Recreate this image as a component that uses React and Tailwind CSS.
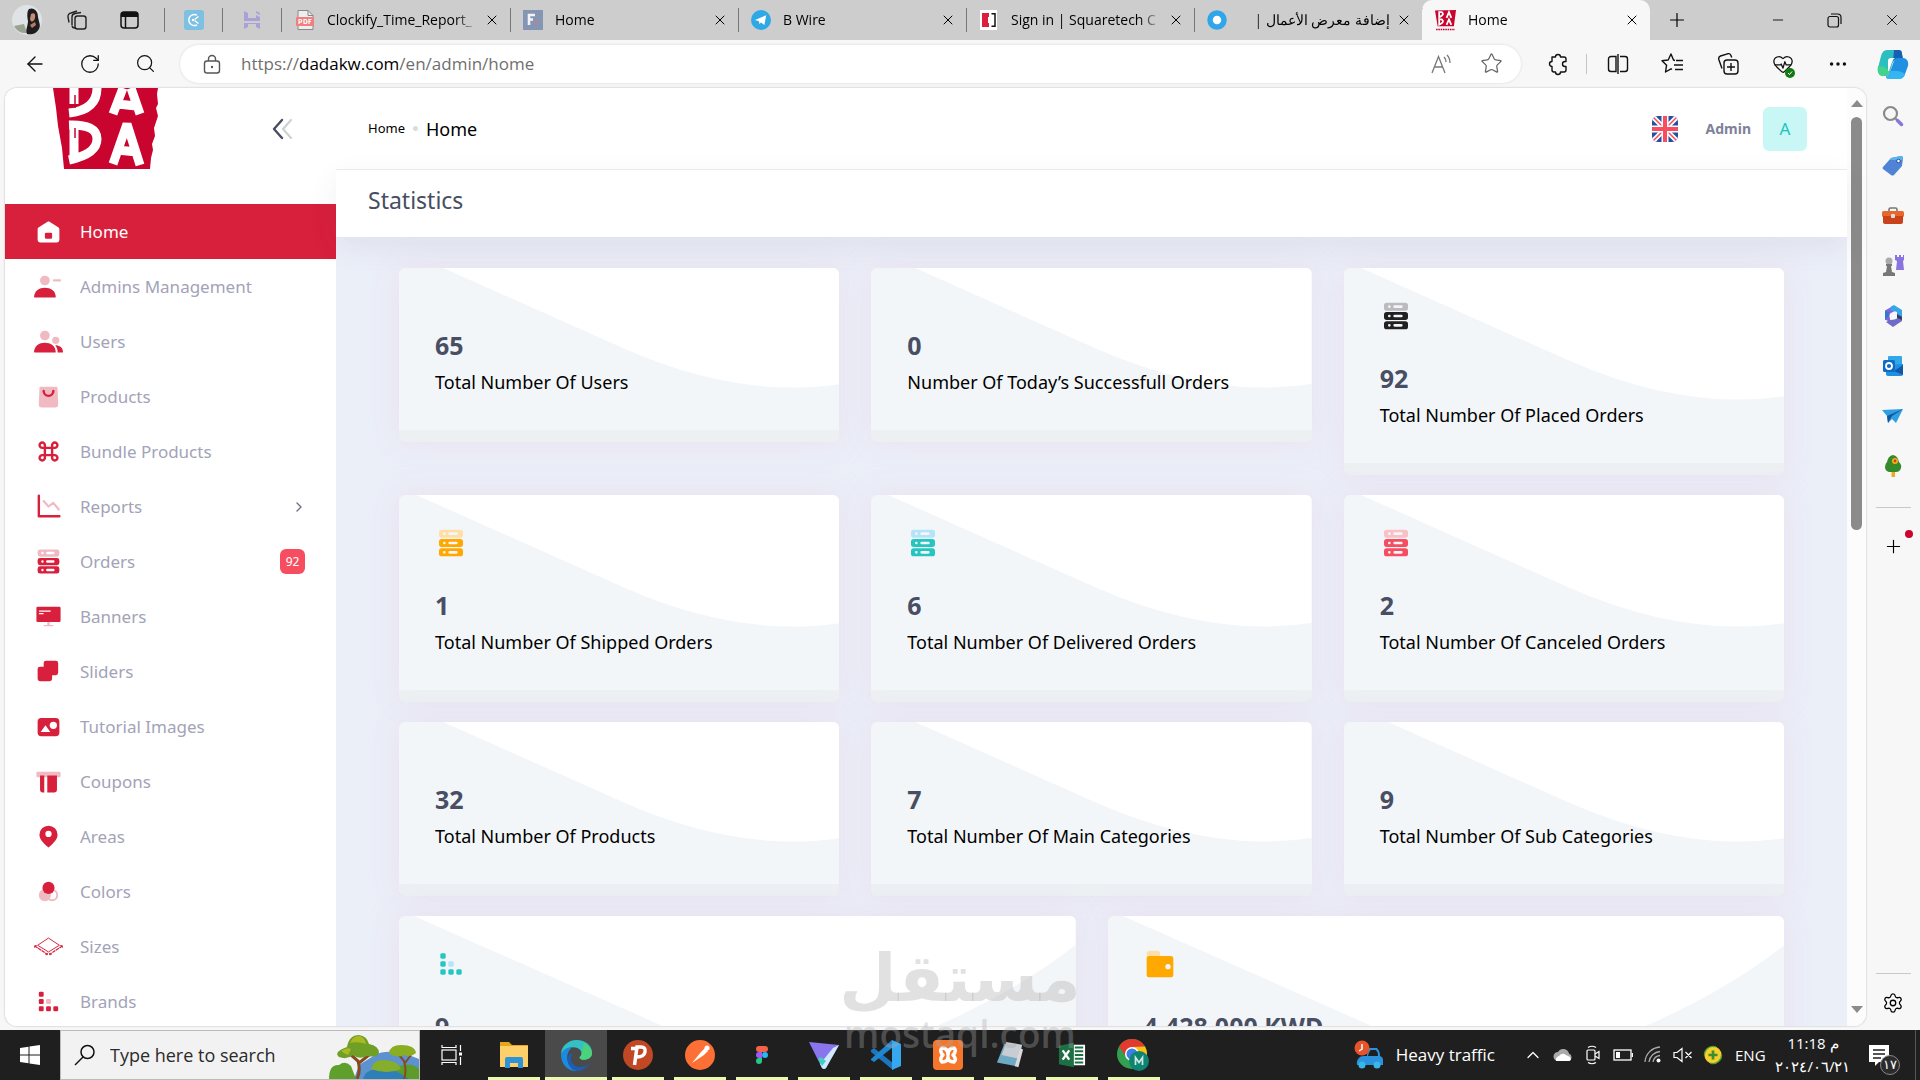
import React from "react";
import { ArrowLeft, RotateCw, Search, Star, X, Plus, Minus, Ellipsis, ChevronRight, ChevronUp, Settings, HeartPulse } from "lucide-react";

const UI = "font-['Open_Sans','Noto_Sans',sans-serif]";
const RED = "#d81f3c";
const PINK = "#f0bac2";

const Svg = ({ size = 24, vb = "0 0 24 24", children, className = "" }) => (
  <svg width={size} height={size} viewBox={vb} fill="none" aria-hidden="true" className={`shrink-0 ${className}`}>{children}</svg>
);

/* ---------- favicons ---------- */
const DadaMark = ({ size = 21 }) => (
  <Svg size={size} vb="0 0 20 20">
    <path d="M0 0.5 20 0 18 15.5H2.5Z" fill="#c9042f" />
    <path d="M4 2h2.500q3 2.500-2.500 5zM4 9h2.500q3 2.500-2.500 5zM11 7.500 13.300 2 15.500 7.500M11 14.200 13.300 9 15.500 14.200" stroke="#fff" strokeWidth="1.700" />
    <path d="M1 18.500h18" stroke="#c9042f" strokeWidth="1.500" strokeDasharray="1.500 .7" />
  </Svg>
);
const ClockifyIcon = () => (
  <Svg size={20} vb="0 0 20 20"><rect width="20" height="20" rx="3" fill="#7cc0e2" /><path d="M13 5.200a5.500 5.500 0 1 0 0 9.600M10.500 9.500l4-3M10.500 10.500l4 3" stroke="#fff" strokeWidth="1.400" /><circle cx="9" cy="10" r="1.200" fill="#fff" /></Svg>
);
const HIcon = () => (
  <Svg size={20} vb="0 0 20 20"><path d="M2 1 6 3v5h8V5l4 2v4H2zM14 1l4 2v2l-4-2zM2 13h16v6l-4-2v-3H6v3l-4 2z" fill="#aaa2d6" /></Svg>
);
const PdfIcon = () => (
  <Svg size={20} vb="0 0 20 20"><path d="M3 .5h10l5 5v14H3z" fill="#eee" stroke="#888" /><path d="M13 .5v5h5" stroke="#888" /><rect x="1" y="7" width="18" height="9" rx="1" fill="#f08080" /><path d="M4 14V9.500h1.500a1.300 1.300 0 0 1 0 2.600H4M9 9.500v4h1a2 2 0 0 0 0-4zM14 14V9.500h2.500M14 11.500h2" stroke="#fff" strokeWidth="1.200" /></Svg>
);
const FIcon = () => (
  <Svg size={20} vb="0 0 20 20"><rect width="20" height="20" fill="#8496b4" /><path d="M6 15V5h6M6 9.500h4" stroke="#f4f4f4" strokeWidth="2.600" /><path d="M13.500 9v6" stroke="#b9848e" strokeWidth="2" /></Svg>
);
const TelegramIcon = () => (
  <Svg size={20} vb="0 0 20 20"><circle cx="10" cy="10" r="10" fill="#2fa9e6" /><path d="M4 10 15.200 5.300 13.400 15 10 12.400 8.400 14 8 11.200z" fill="#fff" /></Svg>
);
const SquareIcon = () => (
  <Svg size={20} vb="0 0 20 20"><rect x="1" width="17" height="20" fill="#fff" /><rect x="3" y="3" width="7" height="14" fill="#dc1f3d" /><path d="M9 7h2v6H9z" fill="#fff" /><path d="M12.500 3.700H16v12.600h-3.500" stroke="#111" strokeWidth="1.500" /></Svg>
);
const RingIcon = () => (
  <Svg size={20} vb="0 0 20 20"><circle cx="10" cy="10" r="7" stroke="#2fa6ea" strokeWidth="5.500" fill="#fff" /></Svg>
);

const Tab = ({ icon, title, active, rtl }) => (
  <div className={`relative flex h-10 w-[228px] shrink items-center gap-3 pr-2 pl-[13px] ${active ? "rounded-t-[10px] bg-[#f7f7f7]" : ""}`}>
    {icon}
    <span dir={rtl ? "rtl" : "ltr"} className={`flex-1 overflow-hidden text-sm leading-6 whitespace-nowrap ${rtl ? "[mask-image:linear-gradient(to_left,black_85%,transparent)]" : "[mask-image:linear-gradient(to_right,black_85%,transparent)]"}`}>{title}</span>
    <button aria-label="Close tab" className="-ml-2 flex h-6 w-5 items-center justify-center"><X size={16} strokeWidth={1.5} /></button>
    {!active && <span className="absolute top-2 -right-px h-6 w-px bg-[#777]" />}
  </div>
);

const TabBar = () => (
  <div className="flex h-10 shrink-0 items-center bg-[#cdcdcd]">
    <div className="flex w-[164px] shrink-0 items-center gap-6 pl-3">
      <Svg size={30} vb="0 0 30 30">
        <circle cx="15" cy="15" r="15" fill="#dfe3e5" />
        <path d="M2 21 12 19l3 9q-9 1-13-7z" fill="#9aa292" />
        <path d="M17 4c5-2 9 2 9 8 1 6 3 8 1 12-3 5-8 6-12 5-2-4 1-8 1-13-1-5-1-10 1-12z" fill="#1f1c20" />
        <path d="M19 9c3-2 5 0 4 4s-4 5-5 1z" fill="#c58d74" />
        <path d="M18 20l5-3 1 3-4 3z" fill="#b47d68" />
      </Svg>
      <button aria-label="Workspaces">
        <Svg size={22} vb="0 0 22 22"><g stroke="#222" strokeWidth="1.400"><rect x="9" y="7" width="11" height="13" rx="2.500" /><path d="M6 16.500V8a3.500 3.500 0 0 1 3-3.500l6-1M3 13.500 2 8a3.500 3.500 0 0 1 3-4l6-2" /><path d="M6 17q.5 2 3 2" /></g></Svg>
      </button>
      <button aria-label="Tab actions menu" className="ml-2">
        <Svg size={20} vb="0 0 20 20"><rect x="1" y="2" width="17" height="16" rx="3" stroke="#111" strokeWidth="1.500" /><path d="M1 5a3 3 0 0 1 3-3h11a3 3 0 0 1 3 3v2H1z" fill="#111" /><path d="M5.500 7v11" stroke="#111" strokeWidth="1.500" /></Svg>
      </button>
    </div>
    <div className="flex h-6 w-[59px] shrink-0 items-center justify-center border-x border-[#777]"><ClockifyIcon /></div>
    <div className="flex h-6 w-[59px] shrink-0 items-center justify-center border-r border-[#777]"><HIcon /></div>
    <Tab icon={<PdfIcon />} title="Clockify_Time_Report_" />
    <Tab icon={<FIcon />} title="Home" />
    <Tab icon={<TelegramIcon />} title="B Wire" />
    <Tab icon={<SquareIcon />} title="Sign in | Squaretech C" />
    <Tab icon={<RingIcon />} title="إضافة معرض الأعمال |" rtl />
    <Tab icon={<DadaMark />} title="Home" active />
    <button aria-label="New tab" className="flex h-10 w-[54px] shrink-0 items-center justify-center"><Plus size={22} strokeWidth={1.3} /></button>
    <div className="ml-auto flex h-10 items-center">
      <button aria-label="Minimize" className="flex w-[57px] justify-center"><Minus size={16} strokeWidth={1.3} /></button>
      <button aria-label="Restore" className="flex w-[57px] justify-center"><Svg size={15} vb="0 0 15 15"><rect x="1" y="3.500" width="10.500" height="10.500" rx="2" stroke="#111" strokeWidth="1.200" /><path d="M4 1h6.500A3.500 3.500 0 0 1 14 4.500V11" stroke="#111" strokeWidth="1.200" /></Svg></button>
      <button aria-label="Close" className="flex w-[57px] justify-center"><X size={18} strokeWidth={1.2} /></button>
    </div>
  </div>
);

const CopilotIcon = () => (
  <Svg size={32} vb="0 0 32 32">
    <path d="M10 2h11c2 0 4 1 4 4l1 5h-6c-2 0-3 1-4 3l-3 10c-1 3-3 4-5 4H6c-4 0-6-4-5-8L4 8c1-4 3-6 6-6z" fill="#2bbfc0" />
    <path d="M1 18q7 0 12 5l-1 2c-1 2-2 3-4 3H6c-4 0-6-5-5-10z" fill="#42d28a" />
    <path d="M17 2h5c2 0 3 1 3 4l1 5h-6q-3 0-4 3z" fill="#175fb5" />
    <path d="M20 10h6c4 0 6 4 5 8l-3 8c-1 4-4 5-7 5h-9c-2 0-3-1-3-3 2 0 3-1 4-4l4-11q1-3 3-3z" fill="#1f90e2" />
    <path d="M14 23q9-1 14 3c-1 4-4 5-7 5h-9c-2 0-3-1-3-3 3 0 4-2 5-5z" fill="#35b6f2" />
    <path d="M18 10q-2 1-3 4l-3 9h-1V13q0-3 3-3z" fill="#fff" />
  </Svg>
);

const ToolBtn = ({ label, children, w = "w-[55px]" }) => (
  <button aria-label={label} className={`flex h-10 shrink-0 items-center justify-center text-[#111] ${w}`}>{children}</button>
);

const Toolbar = () => (
  <div className="flex h-12 shrink-0 items-center bg-[#f7f7f7] pb-px">
    <div className="flex w-[180px] shrink-0 items-center justify-center">
      <ToolBtn label="Back"><ArrowLeft size={24} strokeWidth={1.4} /></ToolBtn>
      <ToolBtn label="Refresh"><RotateCw size={22} strokeWidth={1.4} /></ToolBtn>
      <ToolBtn label="Search"><Search size={21} strokeWidth={1.4} /></ToolBtn>
    </div>
    <div className="flex h-[38px] flex-1 items-center rounded-full bg-white pr-[18px] pl-[22px] shadow-[0_0_3px_rgba(0,0,0,0.12)]">
      <Svg size={20} vb="0 0 20 20"><rect x="2.500" y="7" width="15" height="12" rx="2.500" stroke="#555" strokeWidth="1.400" /><path d="M6.500 7V5a3.500 3.500 0 0 1 7 0v2" stroke="#555" strokeWidth="1.400" /><circle cx="10" cy="13" r="1.200" fill="#555" /></Svg>
      <div className="ml-[19px] flex-1 text-[17px] leading-6 text-[#6f6f6f]"><a href="https://dadakw.com/en/admin/home">https://<span className="text-black">dadakw.com</span>/en/admin/home</a></div>
      <button aria-label="Read aloud" className="mr-7"><Svg size={22} vb="0 0 22 22"><path d="M2 20 8.500 3.500 15 20M4.500 14h8M14 4q2 2 2 5M17 2q3 3 3 8" stroke="#777" strokeWidth="1.300" /></Svg></button>
      <button aria-label="Add to favorites"><Star size={23} strokeWidth={1.3} color="#666" /></button>
    </div>
    <div className="flex shrink-0 items-center pl-[11px]">
      <ToolBtn label="Extensions" w="w-[51px]"><Svg size={24}><path d="M6 5h3.500a2.500 2.500 0 0 1 5 0H18a2 2 0 0 1 2 2v2.500h-1a2.500 2.500 0 0 0 0 5h1V18a2 2 0 0 1-2 2h-3.500a2.500 2.500 0 0 1-5 0H8a2 2 0 0 1-2-2v-3.500a2.500 2.500 0 0 1 0-5z" stroke="#111" strokeWidth="1.400" strokeLinejoin="round" /></Svg></ToolBtn>
      <span className="mx-[3px] h-5 w-px bg-[#c4c4c4]" />
      <ToolBtn label="Split screen"><Svg size={22} vb="0 0 22 22"><path d="M9 3.500H4A2.500 2.500 0 0 0 1.500 6v10A2.500 2.500 0 0 0 4 18.500h5zM13 3.500h5A2.500 2.500 0 0 1 20.500 6v10a2.500 2.500 0 0 1-2.500 2.500h-5M11 1v20" stroke="#111" strokeWidth="1.400" /></Svg></ToolBtn>
      <ToolBtn label="Favorites"><Svg size={23} vb="0 0 23 23"><path d="M14 8.500 12.500 8 10 2 7.200 8 1 8.700l4.600 4.500L4.500 20l5.500-3.200 1 .7M15 8.500h7M13 13h9M14 17.500h8" stroke="#111" strokeWidth="1.400" strokeLinejoin="round" /></Svg></ToolBtn>
      <ToolBtn label="Collections"><Svg size={22} vb="0 0 22 22"><g stroke="#111" strokeWidth="1.400"><rect x="7" y="7" width="14" height="14" rx="3" /><path d="M14 10v8M10 14h8M5 15.500 1.800 6.500A3 3 0 0 1 3.500 3l7-2.200A3 3 0 0 1 14 2.500l.7 2" /></g></Svg></ToolBtn>
      <ToolBtn label="Browser essentials"><span className="relative"><HeartPulse size={22} strokeWidth={1.4} /><span className="absolute -right-px -bottom-[3px] flex h-[10px] w-[10px] items-center justify-center rounded-full bg-[#137a13]"><Svg size={8} vb="0 0 8 8"><path d="m2 4 1.500 1.500L6 2.500" stroke="#fff" /></Svg></span></span></ToolBtn>
      <ToolBtn label="Settings and more"><Ellipsis size={22} strokeWidth={1.8} /></ToolBtn>
      <ToolBtn label="Copilot"><CopilotIcon /></ToolBtn>
    </div>
  </div>
);

/* ---------- site icons (24 unit grid) ---------- */
const Server = ({ c = RED, l = PINK, size = 29 }) => {
  const bar = (y, f) => <path key={y} fillRule="evenodd" fill={f} d={`M5 ${y}h14a2 2 0 0 1 2 2v2a2 2 0 0 1-2 2H5a2 2 0 0 1-2-2v-2a2 2 0 0 1 2-2zM7 ${y + 2}a1 1 0 1 0 0 2 1 1 0 0 0 0-2zM11 ${y + 2}a1 1 0 0 0 0 2h5a1 1 0 0 0 0-2z`} />;
  return <Svg size={size}>{bar(2, l)}{bar(9, c)}{bar(16, c)}</Svg>;
};
const Bars = ({ c = RED, l = PINK, size = 29 }) => (
  <Svg size={size}>{[[4, 4, c], [4, 10, c], [10, 10, l], [4, 16, c], [10, 16, c], [16, 16, c]].map(([x, y, f]) => <rect key={`${x}-${y}`} x={x} y={y} width="4" height="4" rx="1" fill={f} />)}</Svg>
);
const HomeIcon = () => (
  <Svg size={29}><path fillRule="evenodd" fill="#fff" d="M4 8.400 11.500 3.800a1 1 0 0 1 1 0L20 8.400a2 2 0 0 1 1 1.700V19a2 2 0 0 1-2 2H5a2 2 0 0 1-2-2v-8.900a2 2 0 0 1 1-1.700zM10 13a1 1 0 0 0-1 1v3a1 1 0 0 0 1 1h4a1 1 0 0 0 1-1v-3a1 1 0 0 0-1-1z" /></Svg>
);
const AdminIcon = () => (
  <Svg size={29}><circle cx="9" cy="7" r="4" fill={PINK} /><path d="M16.500 7h5" stroke={PINK} strokeWidth="1.800" strokeLinecap="round" /><path d="M0 20.600C.4 15.600 4.300 13 9 13s8.800 2.300 9 7.600c0 .2 0 .4-.8.4H.6c-.2 0-.6-.2-.6-.4z" fill={RED} /></Svg>
);
const UsersIcon = () => (
  <Svg size={29}><circle cx="9" cy="7" r="4" fill={PINK} /><circle cx="18" cy="11" r="3" fill={PINK} /><path d="M0 20.600C.4 15.600 4.300 13 9 13s8.800 2.300 9 7.600c0 .2 0 .4-.8.4H.6c-.2 0-.6-.2-.6-.4zM17.600 15c3.400 0 6.200 1.700 6.400 5.400 0 .2 0 .6-.6.6h-3.800c0-2.200-.7-4.300-2-6z" fill={RED} /></Svg>
);
const BagIcon = () => (
  <Svg size={29}><path d="M5.500 4h13a1 1 0 0 1 1 .9L20 19a2 2 0 0 1-2 2H6a2 2 0 0 1-2-2l.5-14.100a1 1 0 0 1 1-.9z" fill={PINK} /><path d="M8 7.500a4 4 0 0 0 8 0" stroke={RED} strokeWidth="2" strokeLinecap="round" /></Svg>
);
const CmdIcon = () => (
  <Svg size={29}><path d="M9 9V7a2.200 2.200 0 1 0-2 2h10a2.200 2.200 0 1 0-2-2v10a2.200 2.200 0 1 0 2-2H7a2.200 2.200 0 1 0 2 2z" stroke={RED} strokeWidth="2" /></Svg>
);
const ReportIcon = () => (
  <Svg size={29}><path d="M4 3v17h17" stroke={RED} strokeWidth="2" strokeLinecap="round" strokeLinejoin="round" /><path d="m8 7.500 4 4.500 4-3 4.500 5.500" stroke={PINK} strokeWidth="1.800" strokeLinecap="round" strokeLinejoin="round" /></Svg>
);
const BannerIcon = () => (
  <Svg size={29}><path d="M11 15h2v4h3v1H8v-1h3z" fill={PINK} /><rect x="2" y="4" width="20" height="12.500" rx="1" fill={RED} /><path d="M4.500 7.500h9M4.500 9.700h3" stroke="#fff" strokeWidth="1" strokeLinecap="round" /></Svg>
);
const SliderIcon = () => (
  <Svg size={29}><rect x="8" y="3" width="12" height="12" rx="2" fill={RED} /><rect x="3" y="8" width="12" height="12" rx="2" fill={RED} /></Svg>
);
const ImageIcon = () => (
  <Svg size={29}><rect x="3" y="5" width="18" height="15" rx="3" fill={RED} /><circle cx="16" cy="11" r="3" fill="#fff" /><path d="m5.500 16.500 4-5.500 4 5.500z" fill="#fff" /></Svg>
);
const CouponIcon = () => (
  <Svg size={29}><rect x="2" y="4" width="20" height="4.500" rx="1" fill={PINK} /><path d="M5 7h3.500v14H7a2 2 0 0 1-2-2zM11 7h8v12a2 2 0 0 1-2 2h-6z" fill={RED} /></Svg>
);
const PinIcon = () => (
  <Svg size={29}><path fillRule="evenodd" d="M12 21c-5-4-7.500-7.300-7.500-10.500a7.500 7.500 0 0 1 15 0C19.500 13.700 17 17 12 21zm0-8.500a2.600 2.600 0 1 0 0-5.200 2.600 2.600 0 0 0 0 5.200z" fill={RED} /></Svg>
);
const ColorsIcon = () => (
  <Svg size={29}><circle cx="9" cy="15" r="5" fill={PINK} /><circle cx="15" cy="15" r="4.200" stroke={PINK} strokeWidth="1.600" /><circle cx="12" cy="9" r="5" fill={RED} /></Svg>
);
const SizesIcon = () => (
  <Svg size={29}><g stroke={RED} strokeWidth=".8"><path d="M12 5 3 11l9 5.500 9-5.500z" /><path d="m.5 11.500 10.500 7M23.500 11.500l-10.500 7" strokeWidth="1" strokeDasharray="3 .5" /><path d="m.5 13 .2-1.800 1.800.3M23.500 13l-.2-1.800-1.800.3M9.500 18.700l1.700.1-.3-1.600M14.500 18.700l-1.700.1.3-1.600" /></g></Svg>
);
const WalletIcon = () => (
  <Svg size={32}><rect x="2" y="2" width="10" height="9" rx="2" fill="#ffdfa8" /><path fillRule="evenodd" d="M4 6h16a2 2 0 0 1 2 2v12a2 2 0 0 1-2 2H4a2 2 0 0 1-2-2V8a2 2 0 0 1 2-2zm14 6a2 2 0 1 0 0 4 2 2 0 0 0 0-4z" fill="#ffa800" /></Svg>
);

const MENU = [
  ["Home", HomeIcon], ["Admins Management", AdminIcon], ["Users", UsersIcon], ["Products", BagIcon], ["Bundle Products", CmdIcon],
  ["Reports", ReportIcon], ["Orders", Server], ["Banners", BannerIcon], ["Sliders", SliderIcon], ["Tutorial Images", ImageIcon],
  ["Coupons", CouponIcon], ["Areas", PinIcon], ["Colors", ColorsIcon], ["Sizes", SizesIcon], ["Brands", Bars],
];

const Sidebar = () => (
  <aside className="flex w-[331px] shrink-0 flex-col bg-white">
    <div className="flex h-[116px] shrink-0 items-start justify-between pr-[42px] pl-11">
      <svg width="110" height="81" viewBox="0 0 110 81" fill="none" role="img" aria-label="Dada">
        <path d="M4 0h105l-1 6 1 10-2 4 2 8-4 12 1 8-3 8 1 6-2 8-1 11H15L13 60 9 38 7 20z" fill="#c9042f" />
        <path d="M25 0v16M20 25q28-3 28-25M64 26 74 0M91 26 82 0M69 16l18 2" stroke="#fff" strokeWidth="9" />
        <path d="M25 35v38M20 37q28-1 28 14T20 72" stroke="#fff" strokeWidth="9" />
        <path d="M64 76 78 36 91 77M68 62l20 2" stroke="#fff" strokeWidth="9" strokeLinejoin="bevel" />
        <path d="M26 7v13M26 40v10" stroke="#c9042f" strokeWidth="1.500" />
      </svg>
      <button aria-label="Collapse menu" className="mt-[29px]">
        <Svg size={24}><path d="m12 3-8 9 8 9" stroke="#484e63" strokeWidth="2.400" strokeLinecap="round" strokeLinejoin="round" /><path d="m21 3-8 9 8 9" stroke="#cfd0d6" strokeWidth="2.200" strokeLinecap="round" strokeLinejoin="round" /></Svg>
      </button>
    </div>
    <nav>
      <ul>
        {MENU.map(([label, Icon], i) => (
          <li key={label}>
            <a href={`#${label}`} className={`flex h-[55px] items-center pr-[31px] pl-[29px] text-[17px] ${i === 0 ? "bg-[#d81f3c] text-white" : "text-[#a2a3b7]"}`}>
              <Icon />
              <span className="ml-[17px] flex-1">{label}</span>
              {label === "Reports" && <ChevronRight size={16} strokeWidth={2} color="#6c7080" className="-mr-0.5" />}
              {label === "Orders" && <span className="flex h-[25px] w-[25px] items-center justify-center rounded-md bg-[#f64e60] text-xs text-white">92</span>}
            </a>
          </li>
        ))}
      </ul>
    </nav>
  </aside>
);

const Wave = ({ shape }) => (
  <svg className="absolute inset-x-0 top-0 h-full w-full" viewBox={shape === "wide" ? "0 0 677 207" : shape === "short" ? "0 12 440 174" : "0 0 440 207"} preserveAspectRatio="xMinYMin slice" aria-hidden="true">
    {shape === "wide"
      ? <path d="M15 0 264 110Q420 175 538 110 620 74 677 29V0z" fill="#fff" />
      : <path d="M15 -1 226 93Q340 143 440 128V0z" fill="#fff" />}
  </svg>
);

const StatCard = ({ value, label, icon, shape }) => (
  <article className="relative self-start overflow-hidden rounded-md border-b-[12px] border-[#ecf0f3] bg-[#f3f6f9] shadow-[0_0_30px_rgba(232,220,238,0.8)]">
    <Wave shape={shape} />
    <div className={`relative px-9 pb-[35px] ${icon ? "pt-8" : "pt-[61px]"}`}>
      {icon && <div className="mb-[30px]">{icon}</div>}
      <div className="text-[25px] leading-8 font-bold text-[#484e63]">{value}</div>
      <div className="mt-2 text-lg leading-[26px] text-black">{label}</div>
    </div>
  </article>
);

const UkFlag = () => (
  <svg width="26" height="26" viewBox="0 0 26 26" role="img" aria-label="English" className="rounded-md">
    <rect width="26" height="26" fill="#27509b" />
    <path d="M0 0 26 26M26 0 0 26" stroke="#fff" strokeWidth="5" /><path d="M0 0 26 26M26 0 0 26" stroke="#f64e60" strokeWidth="1.500" />
    <path d="M13 0v26M0 13h26" stroke="#fff" strokeWidth="7" /><path d="M13 0v26M0 13h26" stroke="#f64e60" strokeWidth="4" />
  </svg>
);

const Page = () => (
  <div className="flex min-w-0 flex-1 overflow-hidden rounded-[12px] bg-white font-['Noto_Sans','Open_Sans',sans-serif] shadow-[0_0_2px_rgba(0,0,0,0.3)]">
    <Sidebar />
    <main className="flex min-w-0 flex-1 flex-col bg-[#ebeff8]">
      <header className="relative z-10 flex h-[82px] shrink-0 items-center border-b border-[#ebedf3] bg-white pr-10 pl-8">
        <nav aria-label="Breadcrumb" className="flex items-center gap-2 text-black">
          <a href="#home" className="text-[13px]">Home</a><span className="h-[5px] w-[5px] rounded-full bg-[#d9dbe0]" /><span className="text-lg">Home</span>
        </nav>
        <div className="ml-auto flex items-center">
          <UkFlag />
          <span className="mr-3 ml-7 text-sm font-bold text-[#7e8299]">Admin</span>
          <span className="flex h-11 w-11 items-center justify-center rounded-md bg-[#c9f7f5] text-[17px] text-[#1bc5bd]">A</span>
        </div>
      </header>
      <div className="relative z-10 flex h-[67px] shrink-0 items-center bg-white px-8 pb-2 shadow-[0_10px_30px_rgba(82,63,105,0.08)]">
        <h1 className="text-[23px] leading-8 text-[#464e5f]">Statistics</h1>
      </div>
      <section className="flex min-h-0 flex-1 flex-col gap-5 overflow-hidden px-[63px] pt-[31px]">
        <div className="grid shrink-0 grid-cols-3 gap-x-8 gap-y-5">
          <StatCard value="65" label="Total Number Of Users" shape="short" />
          <StatCard value="0" label="Number Of Today’s Successfull Orders" shape="short" />
          <StatCard value="92" label="Total Number Of Placed Orders" icon={<Server size={32} c="#212121" l="#bcbabf" />} />
          <StatCard value="1" label="Total Number Of Shipped Orders" icon={<Server size={32} c="#ffa800" l="#ffdfa8" />} />
          <StatCard value="6" label="Total Number Of Delivered Orders" icon={<Server size={32} c="#26c6c0" l="#b5e3f7" />} />
          <StatCard value="2" label="Total Number Of Canceled Orders" icon={<Server size={32} c="#f64e60" l="#f9c0c6" />} />
          <StatCard value="32" label="Total Number Of Products" shape="short" />
          <StatCard value="7" label="Total Number Of Main Categories" shape="short" />
          <StatCard value="9" label="Total Number Of Sub Categories" shape="short" />
        </div>
        <div className="grid shrink-0 grid-cols-2 gap-8">
          <StatCard value="9" label="Total Number Of Brands" shape="wide" icon={<Bars size={32} c="#26c6c0" l="#b5e3f7" />} />
          <StatCard value="4,428.000 KWD" label="Total Sales" shape="wide" icon={<WalletIcon />} />
        </div>
      </section>
    </main>
    <div className="flex w-[19px] shrink-0 flex-col items-center bg-[#fcfcfc] pt-[10px] pb-[10px]" aria-hidden="true">
      <Svg size={12} vb="0 0 12 12"><path d="M6 2 12 9H0z" fill="#8b8b8b" /></Svg>
      <span className="mt-[7px] h-[45%] w-[11px] rounded-full bg-[#8b8b8b]" />
      <Svg size={12} vb="0 0 12 12" className="mt-auto"><path d="M6 9 12 2H0z" fill="#8b8b8b" /></Svg>
    </div>
  </div>
);

/* ---------- browser side panel ---------- */
const PANEL = [
  ["Search", <Svg size={22} vb="0 0 22 22"><circle cx="8.500" cy="8.500" r="6.500" stroke="#8a8a8a" strokeWidth="2.200" /><path d="m13.500 13.500 2 2" stroke="#8a8a8a" strokeWidth="2" /><path d="m15.500 15.500 4 4" stroke="#8a75e0" strokeWidth="3.500" strokeLinecap="round" /></Svg>],
  ["Shopping", <Svg size={22} vb="0 0 22 22"><path d="M1 12 9 3l10-2q2 0 2 2l-1 8-8 9q-1.500 1-3 0l-8-6q-1-1 0-2z" fill="#4f83d6" /><path d="M9 3l10-2q2 0 2 2l-1 2H8z" fill="#58b4ee" /><circle cx="16.500" cy="6" r="1.800" fill="#fff" stroke="#274f9b" /></Svg>],
  ["Tools", <Svg size={22} vb="0 0 22 22"><path d="M7 7V4.500A1.500 1.500 0 0 1 8.500 3h5A1.500 1.500 0 0 1 15 4.500V7" stroke="#777" strokeWidth="1.600" /><rect y="6" width="22" height="6" rx="1.500" fill="#e8682c" /><path d="M1 11h20v6a2 2 0 0 1-2 2H3a2 2 0 0 1-2-2z" fill="#c9421c" /><rect x="9" y="9" width="4" height="4" rx="1" fill="#ddd" /></Svg>],
  ["Games", <Svg size={22} vb="0 0 22 22"><circle cx="7" cy="6" r="3.500" fill="#aaa" /><path d="M4 9h6v2H9l1 6H4l1-6H4zM1 18q6-3 12 0v3H1z" fill="#777" /><path d="M13 0h2v2h2V0h2v2h2V0h1v5l-1 1 1 9h-8l1-9-2-1z" fill="#8a75e0" /></Svg>],
  ["Microsoft 365", <Svg size={22} vb="0 0 22 22"><path d="M11 1 3 5.500v9L8 17v-8l6-4z" fill="#8465d8" /><path d="M9 1.500 12 0l8 5v8l-5-3V7L8 5z" fill="#35a6e8" /><path d="M20 10v6l-9 6-7-5 4-2 6-1z" fill="#6f6cc9" /><path d="m15 9 5 3v3l-5-2z" fill="#333c66" /><path d="M3 6v9l4-4V7z" fill="#3276d0" /><circle cx="11" cy="11" r="3.500" fill="#f7f7f7" /></Svg>],
  ["Outlook", <Svg size={22} vb="0 0 22 22"><rect x="6" y="1" width="14" height="12" rx="1" fill="#31a8ea" /><path d="M4 10 21 9v10a2 2 0 0 1-2 2H6a2 2 0 0 1-2-2z" fill="#1f8fdf" /><path d="m21 10-9 6 9 4z" fill="#1357a8" /><rect x="1" y="5" width="12" height="12" rx="1.500" fill="#0f6cc4" /><circle cx="7" cy="11" r="3" stroke="#fff" strokeWidth="1.800" /></Svg>],
  ["Drop", <Svg size={22} vb="0 0 22 22"><path d="m0 5 21-1-7 14-4-4-4 4-1-7z" fill="#2f9fe4" /><path d="M21 4 5 11l1 7 4-7z" fill="#15559c" /></Svg>],
  ["E-tree", <Svg size={22} vb="0 0 22 22"><path d="M9.500 15h3.500v7H9.500z" fill="#f2a91d" /><path d="M11 0q5 1 6 7 3 3 2 6-1 4-5 4H7q-4-1-4-5 0-3 2-5 1-6 6-7z" fill="#358a2a" /><circle cx="13" cy="6" r="3" fill="#f5b21f" /><circle cx="13" cy="6" r="1.400" fill="#e03c20" /></Svg>],
];
const EdgePanel = () => (
  <aside className="flex w-[54px] shrink-0 flex-col items-center pt-[3px] pb-3">
    {PANEL.map(([label, icon]) => <button key={label} aria-label={label} className="flex h-[50px] w-full shrink-0 items-center justify-center">{icon}</button>)}
    <span className="mt-4 h-px w-[35px] bg-[#c9c9c9]" />
    <button aria-label="Customize" className="relative mt-[14px] flex h-12 w-full items-center justify-center"><Plus size={21} strokeWidth={1.3} /><span className="absolute top-2 right-[7px] h-2 w-2 rounded-full bg-[#c9042f]" /></button>
    <span className="mt-auto h-px w-[35px] bg-[#c9c9c9]" />
    <button aria-label="Settings" className="mt-[18px]"><Settings size={22} strokeWidth={1.4} /></button>
  </aside>
);

/* ---------- taskbar ---------- */
const APPS = [
  ["File Explorer", <Svg size={30} vb="0 0 30 30"><path d="M1 2h9l3 3h16v22H1z" fill="#e5a51c" /><path d="M1 6h28v21H1z" fill="#fdd06a" /><path d="M6 28v-9a2 2 0 0 1 2-2h14a2 2 0 0 1 2 2v9h-5v-5h-8v5z" fill="#2f93d8" /></Svg>],
  ["Microsoft Edge", <Svg size={31} vb="0 0 30 30"><path d="M15 0c9 0 15 6 15 12 0 5-4 7-8 7-3 0-4-1-4-2s2-2 2-4c0-3-3-6-8-6C6 7 2 10 0 14 0 6 7 0 15 0z" fill="#35c1c4" /><path d="M22 3c5 3 8 6 8 10 0 4-4 6-8 6-3 0-4-1-4-2s2-2 2-4 2-7 2-10z" fill="#4bd27a" /><path d="M0 14C2 9 6 7 11 7c-3 2-5 6-5 10 0 7 5 12 11 13C7 31 0 24 0 14z" fill="#1b8be0" /><path d="M11 13c-4 7 1 14 9 13 4 0 6-2 8-4-3 6-8 8-13 8C9 29 5 22 7 16c1-2 2-3 4-3z" fill="#1c5eb0" /></Svg>, true],
  ["P app", <Svg size={30} vb="0 0 30 30"><circle cx="15" cy="15" r="15" fill="#c14824" /><path d="M11.500 25 14 7h4q5 0 4 5t-8 5M8 8.500h6" stroke="#fff" strokeWidth="3.500" /></Svg>],
  ["Postman", <Svg size={30} vb="0 0 30 30"><circle cx="15" cy="15" r="15" fill="#fd7035" /><path d="m7 23 9-11 3 3zM16 12l4-4 3 3-4 4z" fill="#fff" /><circle cx="22" cy="8" r="2.500" fill="#fff" /></Svg>],
  ["Figma", <Svg size={20} vb="0 0 20 20"><path d="M7 1h3v6H7a3 3 0 0 1 0-6zM10 1h3a3 3 0 0 1 0 6h-3z" fill="#f4624a" /><path d="M7 7h3v6H7a3 3 0 0 1 0-6z" fill="#9a5cf5" /><circle cx="13" cy="10" r="3" fill="#2ab5f5" /><path d="M7 13h3v3a3 3 0 1 1-3-3z" fill="#22c983" /></Svg>],
  ["Proton VPN", <Svg size={30} vb="0 0 30 30"><path d="M0 2 30 5 17 28q-2 2-4 0z" fill="#8b75ee" /><path d="M30 5 17 28q-2 2-4 0l-2-4 13-16z" fill="#cfe9ff" /><path d="m9 19 3-2 5 4-4 5z" fill="#3fd0c0" /></Svg>],
  ["Visual Studio Code", <Svg size={30} vb="0 0 30 30"><path d="M0 10 3 8l19 15v7L0 12z" fill="#1b76bd" /><path d="M0 19 21 0v8L3 22l-3-2z" fill="#1f86d0" /><path d="M21 0 30 4v22l-9 4z" fill="#35a8f0" /></Svg>],
  ["XAMPP", <Svg size={30} vb="0 0 30 30"><rect width="30" height="30" rx="4" fill="#f5762b" /><path d="M9 8q6 0 6 7 0-7 6-7 3 3-1 7 4 4 1 7-6 0-6-5 0 5-6 5-3-3 1-7-4-4-1-7z" stroke="#fff" strokeWidth="3.500" strokeLinejoin="round" /></Svg>],
  ["Notepad", <Svg size={28} vb="0 0 30 30"><path d="M9 3 26 6 22 27 1 23z" fill="#6fa9c4" /><path d="M11 1 28 4 25 19 6 15z" fill="#c7cdd2" /><path d="m26 8 3 1-5 19-4-1z" fill="#dadada" /></Svg>],
  ["Excel", <Svg size={28} vb="0 0 30 30"><path d="M15 4h14v22H15z" fill="#fff" /><path d="M18 7h9M18 11h9M18 15h9M18 19h9M18 23h9" stroke="#1d7044" strokeWidth="2" /><path d="M1 5 17 2v26L1 25z" fill="#1d7044" /><path d="m5 10 7 10M12 10 5 20" stroke="#fff" strokeWidth="2.500" /></Svg>],
  ["Google Chrome", <Svg size={34} vb="0 0 34 34"><circle cx="15" cy="16" r="15" fill="#33a04f" /><path d="M2 8.500a15 15 0 0 1 26 0L15 12z" fill="#e23b2e" /><path d="M28 8.500a15 15 0 0 1-12 22.500l5-13-6-9z" fill="#fbc116" /><path d="M2 8.500 10 20l5-11z" fill="#e23b2e" /><circle cx="15" cy="16" r="7" fill="#fff" /><circle cx="15" cy="16" r="5.500" fill="#3c7fe6" /><circle cx="22" cy="23" r="10" fill="#0e8573" /><path d="M18.500 27v-7.500l3.500 5 3.500-5V27" stroke="#cfe6e2" strokeWidth="1.700" /></Svg>],
];

const Taskbar = () => (
  <footer className="flex h-[50px] shrink-0 items-stretch bg-[#1f1f1f] text-white">
    <button aria-label="Start" className="flex w-[60px] shrink-0 items-center justify-center"><Svg size={20} vb="0 0 20 20"><path d="M0 3 8.500 1.700V9.500H0zM9.500 1.500 20 0v9.500H9.500zM0 10.500h8.500v7.800L0 17zM9.500 10.500H20V20L9.500 18.500z" fill="#fff" /></Svg></button>
    <label className="relative flex w-[360px] shrink-0 items-center overflow-hidden border border-[#bbb] bg-[#f2f2f2] pl-[13px]">
      <Svg size={22} vb="0 0 22 22"><circle cx="13.500" cy="8" r="6.500" stroke="#111" strokeWidth="1.500" /><path d="M9 13 1 21" stroke="#111" strokeWidth="1.500" /></Svg>
      <input type="text" aria-label="Search" placeholder="Type here to search" className="ml-3.5 w-[190px] bg-transparent text-lg placeholder:text-[#2b2b2b] focus:outline-none" />
      <svg width="90" height="44" viewBox="0 0 90 44" className="absolute right-0 bottom-0" aria-hidden="true">
        <path d="M30 30 46 20q15-8 44 4v20H25z" fill="#5b92cf" />
        <path d="M0 44q0-15 10-14 6-5 12 1l5 13z" fill="#5fa02c" /><path d="M66 44q-2-12 8-14 10-2 16 4v10z" fill="#5d9b2b" />
        <path d="M34 44q2-8 12-10 14-4 34 10z" fill="#2e7fb8" />
        <path d="M42 34q2-10 14-9 14 1 16 9-14 6-30 0z" fill="#86ae2d" />
        <path d="M28 44q4-8 1-18l-8-7M30 28l10-8" fill="none" stroke="#874a20" strokeWidth="3" /><path d="M75 44q3-8 0-18l-5-6M76 28l6-8" fill="none" stroke="#874a20" strokeWidth="2" />
        <path d="M18 12q2-12 12-12 8 1 10 9 10 2 10 9-2 5-12 3-8 4-14-1-6 5-14 2-6-5 8-10z" fill="#6f9f25" /><path d="M21 8q3-8 10-7 5 2 6 8-8-3-16-1zM12 16q6-4 10-2l-3 6q-5-2-7-4z" fill="#a9b823" />
        <path d="M60 18q1-8 12-8 14 0 15 8-6 5-12 2-8 4-15-2z" fill="#8aad22" />
      </svg>
    </label>
    <button aria-label="Task view" className="flex w-[63px] shrink-0 items-center justify-center"><Svg size={22} vb="0 0 22 22"><g stroke="#fff" strokeWidth="1.200"><rect x="1" y="6" width="14" height="10" /><path d="M1 1v2.500h14V1M1 21v-2.500h14V21M19.500 1v6M19.500 13v8" /></g><rect x="18" y="8.500" width="3" height="3" fill="#fff" /></Svg></button>
    {APPS.map(([name, icon, on]) => (
      <button key={name} aria-label={name} className={`relative flex w-[62px] shrink-0 items-center justify-center ${on ? "bg-[#4a4a4a]" : ""}`}>
        {icon}<span className={`absolute bottom-0 h-[3px] bg-[#ecf9b0] ${on ? "inset-x-0" : "inset-x-[5px]"}`} />
      </button>
    ))}
    <div className="ml-auto flex shrink-0 items-center">
      <button className="mr-7 flex items-center gap-3 text-[17px]">
        <Svg size={30} vb="0 0 30 30"><path d="M5 18q1-2 5-2h3q0-5 2-8h8q3 3 3 8 3 1 3 4v5H3q-1-4 2-7z" fill="#2b93dd" /><path d="M14 16q1-5 3-6h5q2 2 2 6z" fill="#1f1f1f" /><circle cx="8" cy="25" r="3.500" fill="#38b6e8" /><circle cx="23" cy="25" r="3.500" fill="#38b6e8" /><circle cx="8" cy="8" r="7.500" fill="#e9532a" /><path d="M8 4v5l-3 2" stroke="#fff" strokeWidth="1.500" /></Svg>
        Heavy traffic
      </button>
      <div className="flex items-center gap-[10px]">
        <ChevronUp size={20} strokeWidth={1.5} />
        <Svg size={20} vb="0 0 20 20"><path d="M5 16a4.500 4.500 0 0 1 0-9 6 6 0 0 1 11 1.500A4 4 0 0 1 16 16z" fill="#aaa" /><path d="M3 16a4 4 0 0 1 3-5q3-4 7-1l4 2q2 3-1 4z" fill="#fff" /></Svg>
        <Svg size={20} vb="0 0 20 20"><g stroke="#fff" strokeWidth="1.200"><rect x="4" y="5" width="8" height="10" rx="1" /><path d="m12 9 4-2.500v7L12 11M5 2.500q4-2.500 8 0M5 17.500q4 2.500 8 0" /></g></Svg>
        <Svg size={20} vb="0 0 20 20"><rect x="1" y="5" width="17" height="10" stroke="#fff" strokeWidth="1.300" /><rect x="3" y="7" width="4" height="6" fill="#fff" /><path d="M19.300 8v4" stroke="#fff" strokeWidth="1.300" /></Svg>
        <Svg size={20} vb="0 0 20 20"><g stroke="#aaa" strokeWidth="1.300"><path d="M2 17A16 16 0 0 1 17 2M6 17A12 12 0 0 1 17 6.500M10 17a8 8 0 0 1 7-6.500" /></g><circle cx="15.500" cy="15.500" r="2" fill="#fff" /></Svg>
        <Svg size={20} vb="0 0 20 20"><path d="M1 7.500h3L9 3.500v13L4 12.500H1zM12.500 7l6 6M18.500 7l-6 6" stroke="#fff" strokeWidth="1.200" /></Svg>
        <Svg size={20} vb="0 0 22 22"><circle cx="11" cy="11" r="9.500" fill="#f7cf2d" stroke="#4c9d32" strokeWidth="1.500" strokeDasharray="18 12" /><path d="M11 6v10M6 11h10" stroke="#3b8f2c" strokeWidth="3" /></Svg>
      </div>
      <span className="ml-3 w-[30px] text-[15px]">ENG</span>
      <div className="flex w-24 flex-col items-center text-[15px] leading-[23px]"><span>11:18 م</span><span>٢٠٢٤/٠٦/٢١</span></div>
      <button aria-label="Notifications" className="relative mr-[15px] ml-[7px] h-10 w-8">
        <Svg size={24} vb="0 0 24 24"><path d="M1 2h20v17H11l-4 4v-4H1z" fill="#fff" /><path d="M5 7h12M5 11h12M5 15h8" stroke="#1f1f1f" strokeWidth="1.500" /></Svg>
        <span className="absolute right-0 bottom-0 flex h-5 w-5 items-center justify-center rounded-full border border-[#888] bg-[#2b2b2b] text-[13px]">١٧</span>
      </button>
      <span className="mr-1 h-full w-px bg-[#555]" />
    </div>
  </footer>
);

export default function App() {
  return (
    <div className={`relative flex h-screen flex-col overflow-hidden bg-[#f7f7f7] text-black ${UI}`}>
      <TabBar />
      <Toolbar />
      <div className="flex min-h-0 flex-1 pb-1 pl-[5px]">
        <Page />
        <EdgePanel />
      </div>
      <Taskbar />
      <div className="pointer-events-none absolute bottom-6 left-1/2 flex -translate-x-1/2 flex-col items-center text-[#a8a8a8]/35" aria-hidden="true">
        <span dir="rtl" className="font-['DejaVu_Sans',sans-serif] text-[66px] leading-[66px] font-bold">مستقل</span>
        <span className="font-['Open_Sans',sans-serif] text-[37px] leading-[44px] font-semibold">mostaql.com</span>
      </div>
    </div>
  );
}
